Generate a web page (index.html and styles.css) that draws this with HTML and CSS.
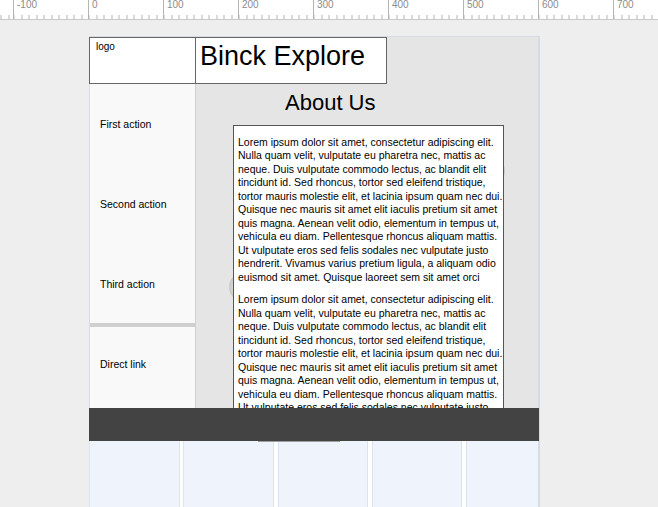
FILE: index.html
```html
<!DOCTYPE html>
<html lang="en">
<head>
<meta charset="utf-8">
<title>Binck Explore – About Us</title>
<link rel="stylesheet" href="styles.css">
</head>
<body>
<div class="ruler">
  <div class="ruler-labels">
    <span>-100</span><span>0</span><span>100</span><span>200</span><span>300</span><span>400</span><span>500</span><span>600</span><span>700</span>
  </div>
</div>
<div class="stage">
  <div class="page">
    <header class="header">
      <div class="logo">logo</div>
      <div class="title">Binck Explore</div>
    </header>
    <div class="body">
      <nav class="sidebar">
        <a class="item">First action</a>
        <a class="item">Second action</a>
        <a class="item item-third">Third action</a>
        <div class="sep"></div>
        <a class="item item-direct">Direct link</a>
      </nav>
      <main class="main">
        <span class="knob knob-left"></span>
        <span class="knob knob-right"></span>
        <h1 class="heading">About Us</h1>
        <div class="textbox">
          <p>Lorem ipsum dolor sit amet, consectetur adipiscing elit. Nulla quam velit, vulputate eu pharetra nec, mattis ac neque. Duis vulputate commodo lectus, ac blandit elit tincidunt id. Sed rhoncus, tortor sed eleifend tristique, tortor mauris molestie elit, et lacinia ipsum quam nec dui. Quisque nec mauris sit amet elit iaculis pretium sit amet quis magna. Aenean velit odio, elementum in tempus ut, vehicula eu diam. Pellentesque rhoncus aliquam mattis. Ut vulputate eros sed felis sodales nec vulputate justo hendrerit. Vivamus varius pretium ligula, a aliquam odio euismod sit amet. Quisque laoreet sem sit amet orci</p>
          <p>Lorem ipsum dolor sit amet, consectetur adipiscing elit. Nulla quam velit, vulputate eu pharetra nec, mattis ac neque. Duis vulputate commodo lectus, ac blandit elit tincidunt id. Sed rhoncus, tortor sed eleifend tristique, tortor mauris molestie elit, et lacinia ipsum quam nec dui. Quisque nec mauris sit amet elit iaculis pretium sit amet quis magna. Aenean velit odio, elementum in tempus ut, vehicula eu diam. Pellentesque rhoncus aliquam mattis. Ut vulputate eros sed felis sodales nec vulputate justo hendrerit. Vivamus varius pretium ligula, a aliquam odio euismod sit amet. Quisque laoreet sem sit amet orci</p>
        </div>
      </main>
    </div>
    <div class="footer"></div>
    <div class="columns">
      <span class="shadow-line"></span>
      <div class="col"></div>
      <div class="col"></div>
      <div class="col"></div>
      <div class="col"></div>
      <div class="col"></div>
    </div>
  </div>
</div>
</body>
</html>
```
FILE: styles.css
```css
html, body {
  margin: 0;
  padding: 0;
}
body {
  background: #eeeeee;
  font-family: "Liberation Sans", Arial, sans-serif;
  color: #000;
  width: 658px;
  height: 507px;
  overflow: hidden;
}

/* ruler */
.ruler {
  height: 19px;
  border-bottom: 1px solid #c9c9c9;
  background-color: #fff;
  background-image: repeating-linear-gradient(to right, #b4b4b4 0 1px, transparent 1px 7.5px);
  background-size: 100% 4px;
  background-position: 13.5px 15px;
  background-repeat: repeat-x;
  overflow: hidden;
}
.ruler-labels {
  display: flex;
  padding-left: 13px;
}
.ruler-labels span {
  flex: none;
  box-sizing: border-box;
  width: 75px;
  height: 19px;
  border-left: 1px solid #b4b4b4;
  padding-left: 3px;
  font-size: 10px;
  line-height: 9px;
  color: #8c8c8c;
}

/* canvas */
.stage {
  padding: 16px 0 0 89px;
}
.page {
  width: 449px;
  background: #e5e5e5;
  border-top: 1px solid #d5dce7;
  border-right: 2px solid #d5dce7;
}

/* header */
.header {
  display: flex;
  height: 47px;
}
.logo {
  box-sizing: border-box;
  width: 107px;
  border: 1px solid #666;
  background: #fff;
  padding: 3px 0 0 6px;
  font-size: 10px;
  line-height: 12px;
}
.title {
  box-sizing: border-box;
  width: 191px;
  border: 1px solid #666;
  border-left: none;
  background: #fff;
  padding: 3px 0 0 4px;
  font-size: 27px;
  line-height: 31px;
}

/* body */
.body {
  display: flex;
  height: 324px;
}
.sidebar {
  box-sizing: border-box;
  width: 107px;
  flex: none;
  background: #f9f9f9;
  border-left: 1px solid #d9dee6;
  border-right: 1px solid #d0d0d0;
  display: flex;
  flex-direction: column;
}
.item {
  display: flex;
  align-items: center;
  height: 80px;
  padding-left: 10px;
  font-size: 10.5px;
  line-height: 12px;
  color: #000;
}
.item-third {
  height: 79px;
}
.sep {
  height: 4px;
  background: #cfcfcf;
}
.item-direct {
  height: 74px;
}

.main {
  position: relative;
  flex: 1;
  overflow: hidden;
  padding-top: 6px;
}
.heading {
  margin: 0 0 9px 89px;
  font-size: 22px;
  line-height: 26px;
  font-weight: normal;
}
.knob {
  position: absolute;
  width: 30px;
  height: 30px;
  border-radius: 50%;
  background: radial-gradient(circle at 50% 50%, #d8d8d8 0 50%, #c2c2c2 78%, #cdcdcd 100%);
}
.knob-left {
  left: 33px;
  top: 188px;
}
.knob-right {
  left: 279px;
  top: 72px;
}
.textbox {
  position: relative;
  z-index: 1;
  box-sizing: border-box;
  width: 271px;
  height: 300px;
  margin-left: 37px;
  border: 1px solid #555;
  background: #fff;
  padding: 9.5px 0 0 4px;
}
.textbox p {
  margin: 0 0 9px;
  font-size: 10.5px;
  line-height: 13.5px;
}

/* footer */
.footer {
  height: 33px;
  background: #434343;
  margin-right: -1px;
}
.columns {
  position: relative;
  display: grid;
  grid-template-columns: repeat(5, 90.5px);
  column-gap: 3.75px;
  height: 70px;
  background: #fff;
  overflow: hidden;
}
.col {
  background: #eff4fc;
  border: 1px solid #dbe4f0;
  border-top: none;
}
.shadow-line {
  position: absolute;
  top: 0;
  left: 169px;
  width: 82px;
  height: 1px;
  background: #9c9c9c;
  z-index: 1;
}
```
